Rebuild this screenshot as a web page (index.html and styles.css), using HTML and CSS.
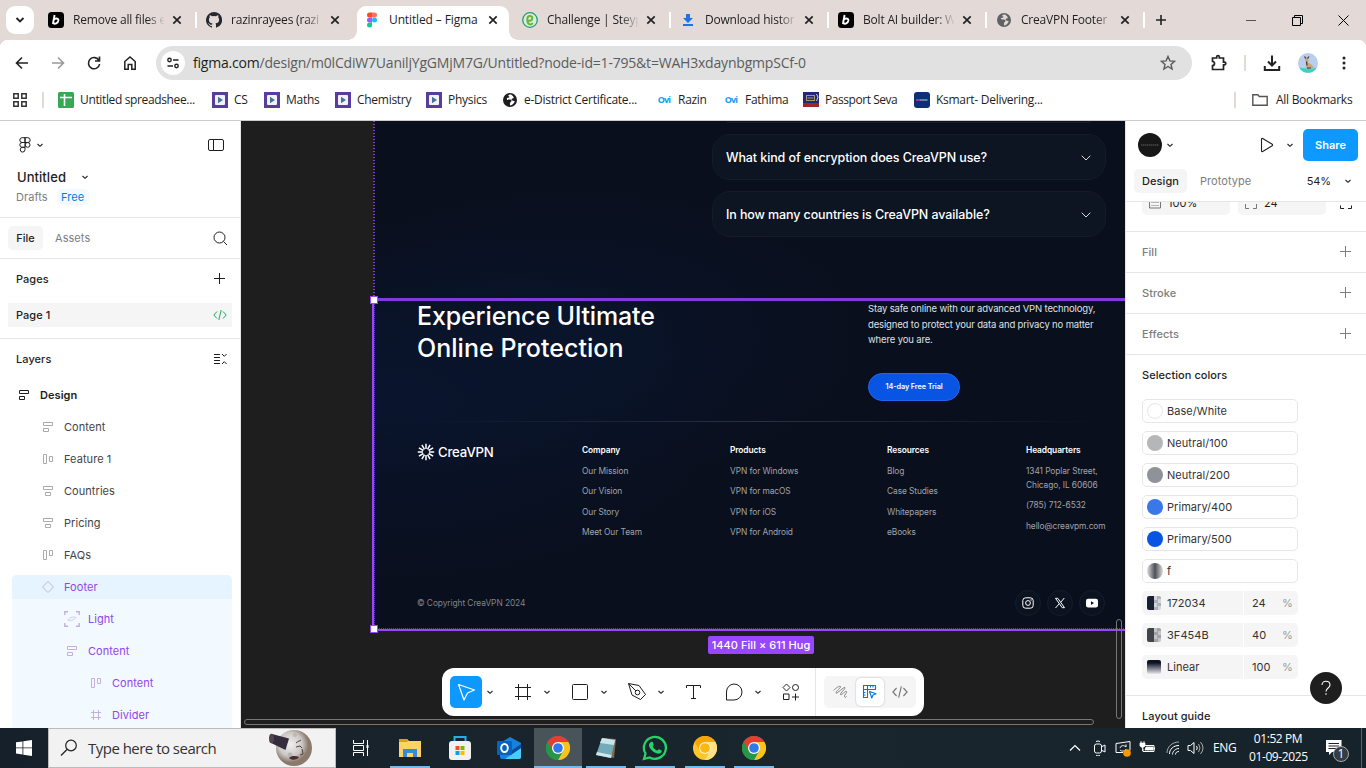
FILE: index.html
```html
<!DOCTYPE html>
<html lang="en">
<head>
<meta charset="utf-8">
<title>Untitled – Figma</title>
<link rel="stylesheet" href="styles.css">
</head>
<body>
<svg class="defs" width="0" height="0">
  <symbol id="close" viewBox="0 0 10 10"><path d="M1.3 1.3l7.4 7.4M8.7 1.3L1.3 8.7" stroke="#222" stroke-width="1.7" fill="none"/></symbol>
  <symbol id="chev" viewBox="0 0 8 8"><path d="M1.5 3L4 5.3 6.5 3" stroke="#1e1e1e" stroke-width="1.100" fill="none"/></symbol>
  <symbol id="plus" viewBox="0 0 12 12"><path d="M5.500 0v11M0 5.500h11" stroke="currentColor" fill="none"/></symbol>
  <symbol id="bolt" viewBox="0 0 16 16"><rect width="16" height="16" rx="3.5" fill="#000"/><path d="M6.6 3L4.9 12M5.6 8.2c1-2.2 5-2.4 4.8.2-.3 2.8-3.7 4.3-5.2 2.5" stroke="#fff" stroke-width="1.9" fill="none"/></symbol>
  <symbol id="globe" viewBox="0 0 16 16"><circle cx="8" cy="8" r="7" fill="currentColor"/><path d="M9 2.500c-3 0-3.300 1.200-2 2 1.500.8-.8 1.700-1.800 1.300-1 1.200.3 1.800 2 1.600 2.300-.2 2.800 1 2 2-.8.800-1.200 1-1.200 2.400v1.600c2.500-.2 4-2 4.800-4.200-1-.6-2.300-.2-3-1.200-.6-1 .3-1.600 1.200-1.600s1-1.300 0-2.200c-.6-.6-1-1-2-1.700z" fill="var(--land)"/></symbol>
  <symbol id="play" viewBox="0 0 16 16"><rect width="16" height="16" fill="#573e9e"/><rect x="3" y="3" width="10" height="10" rx="1" fill="#f4f0fa"/><path d="M6 4.800l5 3.200-5 3.200z" fill="#3d7796"/></symbol>
  <symbol id="lay-left" viewBox="0 0 12 12"><path d="M1.500 1.500h9v3h-9zM1.500 7.500h5v3h-5z" stroke="currentColor" fill="none"/></symbol>
  <symbol id="lay-center" viewBox="0 0 12 12"><path d="M1.500 1.500h9v3h-9zM3.500 7.500h5v3h-5z" stroke="currentColor" fill="none"/></symbol>
  <symbol id="lay-row" viewBox="0 0 12 12"><path d="M1.500 1.500h3v9h-3zM7.500 3.500h3v5h-3z" stroke="currentColor" fill="none"/></symbol>
  <symbol id="lay-rowtop" viewBox="0 0 12 12"><path d="M1.500 1.500h3v9h-3zM7.500 1.500h3v5h-3z" stroke="currentColor" fill="none"/></symbol>
  <symbol id="hash" viewBox="0 0 16 16"><path d="M3.500 0v16M12.500 0v16M0 3.500h16M0 12.500h16" stroke="currentColor" fill="none"/></symbol>
  <symbol id="code" viewBox="0 0 14 12"><path d="M4 2.500L.8 6 4 9.500M10 2.500L13.200 6 10 9.500M8.200 1L5.800 11" stroke="currentColor" fill="none"/></symbol>
  <symbol id="chrome" viewBox="0 0 24 24"><circle cx="12" cy="12" r="12" fill="#2aa14a"/><path d="M1.600 6A12 12 0 0 1 22.400 6H12L7 15z" fill="#e43e31"/><path d="M22.400 6A12 12 0 0 1 12 24L17.200 15 12 6z" fill="#fcc31e"/><path d="M1.600 6L7 15 12 18 16 16 12 24A12 12 0 0 1 1.600 6z" fill="#249847"/><circle cx="12" cy="12" r="6" fill="#fff"/><circle cx="12" cy="12" r="4.800" fill="#2f79ea"/></symbol>
</svg>

<header class="tabs">
  <div class="tabsearch"><svg width="10" height="8" viewBox="0 0 10 8"><path d="M1.500 2L5 5.500 8.500 2" stroke="#222" stroke-width="1.800" fill="none"/></svg></div>
  <div class="tab"><svg width="16" height="16"><use href="#bolt"/></svg><span>Remove all files e</span><svg width="10" height="10"><use href="#close"/></svg></div>
  <div class="tab"><svg width="16" height="16" viewBox="0 0 16 16"><path fill="#24292f" d="M8 0a8 8 0 0 0-2.530 15.590c.4.070.55-.17.55-.38v-1.330c-2.230.48-2.700-1.080-2.700-1.080-.36-.92-.89-1.170-.89-1.170-.73-.5.050-.49.050-.49.800.060 1.230.83 1.230.83.71 1.220 1.870.87 2.330.66.070-.52.280-.87.500-1.070-1.780-.2-3.640-.89-3.640-3.950 0-.87.310-1.590.82-2.150-.08-.2-.36-1.020.08-2.120 0 0 .67-.22 2.200.82a7.700 7.700 0 0 1 4 0c1.530-1.040 2.200-.82 2.200-.82.44 1.100.16 1.920.08 2.120.51.560.82 1.280.82 2.150 0 3.070-1.870 3.750-3.650 3.950.29.250.54.730.54 1.480v2.200c0 .21.150.46.550.38A8 8 0 0 0 8 0z"/></svg><span>razinrayees (razi</span><svg width="10" height="10"><use href="#close"/></svg></div>
  <div class="tab active"><svg width="16" height="16" viewBox="0 0 16 16"><path d="M8 .5H5.500a2.500 2.500 0 0 0 0 5H8z" fill="#f24e1e"/><path d="M8 .5h2.500a2.500 2.500 0 0 1 0 5H8z" fill="#ff7262"/><path d="M8 5.500H5.500a2.500 2.500 0 0 0 0 5H8z" fill="#a259ff"/><circle cx="10.500" cy="8" r="2.500" fill="#1abcfe"/><path d="M8 10.500H5.500A2.500 2.500 0 1 0 8 13z" fill="#0acf83"/></svg><span>Untitled – Figma</span><svg width="10" height="10"><use href="#close"/></svg></div>
  <div class="tab"><svg width="16" height="16" viewBox="0 0 16 16"><circle cx="8" cy="8" r="7.300" fill="#d9eed6" stroke="#249b7d" stroke-width="1.300"/><path d="M5.500 8.500c3 1 5-.5 4.800-2.500C10 3.500 5.500 3 5.300 7c-.2 6 3.700 6.500 5.500 4" stroke="#6bb43c" stroke-width="2" fill="none"/></svg><span>Challenge | Steyp</span><svg width="10" height="10"><use href="#close"/></svg></div>
  <div class="tab"><svg width="16" height="16" viewBox="0 0 16 16"><path d="M6 2h4v4h3L8 11 3 6h3zM3 12h10v2H3z" fill="#1a73e8"/></svg><span>Download histor</span><svg width="10" height="10"><use href="#close"/></svg></div>
  <div class="tab"><svg width="16" height="16"><use href="#bolt"/></svg><span>Bolt AI builder: W</span><svg width="10" height="10"><use href="#close"/></svg></div>
  <div class="tab"><svg class="gray" width="16" height="16"><use href="#globe"/></svg><span>CreaVPN Footer</span><svg width="10" height="10"><use href="#close"/></svg></div>
  <svg class="newtab" width="12" height="12" viewBox="0 0 12 12"><path d="M6 1v10M1 6h10" stroke="#222" stroke-width="1.600"/></svg>
  <div class="win">
    <svg width="11" height="11" viewBox="0 0 11 11"><path d="M0 5.500h10" stroke="#555"/></svg>
    <svg width="11" height="11" viewBox="0 0 11 11"><path d="M.5 2.500h8v8h-8zM2.500 2.500v-2h8v8h-2" stroke="#000" fill="none"/></svg>
    <svg width="11" height="11" viewBox="0 0 11 11"><path d="M.5.5l10 10M10.500.5l-10 10" stroke="#000" fill="none"/></svg>
  </div>
</header>

<div class="nav">
  <svg width="16" height="16" viewBox="0 0 16 16"><path d="M14 8H3M8 2.500L2.500 8 8 13.500" stroke="#222" stroke-width="1.600" fill="none"/></svg>
  <svg width="16" height="16" viewBox="0 0 16 16"><path d="M2 8h11M8 2.500L13.500 8 8 13.500" stroke="#999" stroke-width="1.600" fill="none"/></svg>
  <svg width="16" height="16" viewBox="0 0 16 16"><path d="M13 5.500A5.600 5.600 0 1 0 13.600 9M13.500 1.500V6H9" stroke="#222" stroke-width="1.600" fill="none"/></svg>
  <svg width="16" height="16" viewBox="0 0 16 16"><path d="M2.800 6.500L8 2l5.200 4.500v7.700h-3.400V9.500H6.200v4.700H2.800z" stroke="#222" stroke-width="1.500" fill="none"/></svg>
  <div class="url">
    <i><svg width="14" height="14" viewBox="0 0 14 14"><g stroke="#222" stroke-width="1.400" fill="none"><circle cx="3.500" cy="4" r="1.700"/><path d="M7 4h5.500M1.500 10H7"/><circle cx="10.500" cy="10" r="1.700"/></g></svg></i>
    <p><b>figma.com</b>/design/m0lCdiW7UaniljYgGMjM7G/Untitled?node-id=1-795&amp;t=WAH3xdaynbgmpSCf-0</p>
    <svg width="16" height="16" viewBox="0 0 16 16"><path d="M8 1.500l1.900 4.400 4.700.4-3.600 3.100 1.100 4.600L8 11.500 3.900 14 5 9.400 1.400 6.300l4.700-.4z" stroke="#5a5a5a" stroke-width="1.400" fill="none"/></svg>
  </div>
  <div class="ext">
    <svg width="18" height="18" viewBox="0 0 18 18"><path d="M2.500 4h4.200V2.800a1.300 1.300 0 0 1 2.600 0V4h4.200v4.200h1a1.300 1.300 0 0 1 0 2.600h-1v4.700h-11v-4a2 2 0 0 0 0-4z" stroke="#222" stroke-width="1.700" fill="none"/></svg>
    <b></b>
    <svg width="18" height="18" viewBox="0 0 18 18"><path d="M9 1.500v9.500M5 7.500l4 4 4-4M1.800 12v4h14.400v-4" stroke="#222" stroke-width="2" fill="none"/></svg>
    <svg width="20" height="20" viewBox="0 0 20 20"><circle cx="10" cy="10" r="10" fill="#b9cdee"/><path d="M1.200 14.500a10 10 0 0 0 17.600 0c-6 2-12 1-17.600 0z" fill="#3fcfc3"/><path d="M6.500 3.500l2 2 2-2v4l-.5 2 3.500 2 2.500 3.500-6 .5-2-.5.500-5-1.500-3z" fill="#c5aa7d"/><path d="M6.500 3.500l1.500 2M11 3.500l-1.500 2M8.500 8.500l.5 4M9 15h4" stroke="#3c3328" stroke-width="1.200" fill="none"/></svg>
    <svg width="4" height="16" viewBox="0 0 4 16"><circle cx="2" cy="3" r="1.500" fill="#222"/><circle cx="2" cy="8" r="1.500" fill="#222"/><circle cx="2" cy="13" r="1.500" fill="#222"/></svg>
  </div>
</div>

<div class="bookmarks">
  <svg width="14" height="14" viewBox="0 0 14 14"><path d="M.8.8h4.400v4.400H.8zM8.800.8h4.400v4.400H8.800zM.8 8.800h4.400v4.400H.8zM8.800 8.800h4.400v4.400H8.800z" stroke="#333" stroke-width="1.500" fill="none"/></svg>
  <b></b>
  <div><svg width="16" height="16" viewBox="0 0 16 16"><rect width="16" height="16" rx="1.500" fill="#34a853"/><path d="M2 5.500h12M6.500 2v12" stroke="#fff" stroke-width="1.600"/></svg><span class="s1">Untitled spreadshee...</span></div>
  <div><svg width="16" height="16"><use href="#play"/></svg><span>CS</span></div>
  <div><svg width="16" height="16"><use href="#play"/></svg><span>Maths</span></div>
  <div><svg width="16" height="16"><use href="#play"/></svg><span>Chemistry</span></div>
  <div><svg width="16" height="16"><use href="#play"/></svg><span>Physics</span></div>
  <div><svg width="16" height="16"><use href="#globe"/></svg><span>e-District Certificate...</span></div>
  <div><em>Ovi</em><span>Razin</span></div>
  <div><em>Ovi</em><span>Fathima</span></div>
  <div><svg width="16" height="16" viewBox="0 0 16 16"><path fill="#222778" d="M0 0h16v11H0z"/><path fill="#9b2825" d="M0 11h16v4H0z"/><path d="M3 3.500h9M4.500 6h6M3 8.500h9M3.500 3v6M11.500 3v6" stroke="#a59a68"/><path d="M13.500 2l1.500 3-1.500 4" stroke="#c8d7e7" fill="none"/></svg><span class="s3">Passport Seva</span></div>
  <div><svg width="16" height="16" viewBox="0 0 16 16"><rect width="16" height="16" rx="3" fill="#0d2f77"/><path d="M2 8h4" stroke="#ba3d86" stroke-width="1.600"/><path d="M6 8h7.500" stroke="#9db5db" stroke-width="1.200"/></svg><span>Ksmart- Delivering...</span></div>
  <b></b>
  <div><svg width="16" height="16" viewBox="0 0 16 16"><path d="M.8 2.800h5l1.500 1.700h7.900v8.700H.8z" stroke="#555" stroke-width="1.400" fill="none"/></svg><span>All Bookmarks</span></div>
</div>

<main class="app">
  <aside class="left">
    <div class="l-top">
      <svg width="12" height="16" viewBox="0 0 12 16"><path d="M6 .7H3.200a2.400 2.400 0 0 0 0 4.800H6zM6 .7h2.800a2.400 2.400 0 0 1 0 4.800H6zM6 5.500H3.200a2.400 2.400 0 0 0 0 4.800H6zM6 10.300H3.200A2.400 2.400 0 1 0 6 12.700z" stroke="#1e1e1e" fill="none"/><circle cx="8.600" cy="7.900" r="2.400" stroke="#1e1e1e" fill="none"/></svg>
      <svg width="8" height="8"><use href="#chev"/></svg>
      <svg class="end" width="16" height="12" viewBox="0 0 16 12"><rect x=".5" y=".5" width="15" height="11" rx="1.500" stroke="#1e1e1e" fill="none"/><path d="M5.500.5v11" stroke="#1e1e1e"/></svg>
    </div>
    <div class="l-name"><b>Untitled</b><svg width="8" height="8"><use href="#chev"/></svg></div>
    <div class="l-draft"><span>Drafts</span><i>Free</i></div>
    <div class="l-tabs"><b>File</b><span>Assets</span><svg class="end" width="15" height="15" viewBox="0 0 15 15"><circle cx="6.500" cy="6.500" r="5.500" stroke="#1e1e1e" fill="none"/><path d="M10.500 10.500l3.500 3.500" stroke="#1e1e1e"/></svg></div>
    <div class="l-head pages"><b>Pages</b><svg width="12" height="12"><use href="#plus"/></svg></div>
    <div class="l-page"><b>Page 1</b><svg width="14" height="12"><use href="#code"/></svg></div>
    <div class="l-head layers"><b>Layers</b><svg width="13" height="12" viewBox="0 0 13 12"><path d="M0 1.500h6M0 4.500h6M0 7.500h6M0 10.500h6M8 1l2.300 2.300L12.600 1M8 11l2.300-2.300 2.300 2.300" stroke="#1e1e1e" fill="none"/></svg></div>
    <ul>
      <li class="root"><svg width="12" height="12"><use href="#lay-left"/></svg>Design</li>
      <li class="d1"><svg width="12" height="12"><use href="#lay-left"/></svg>Content</li>
      <li class="d1"><svg width="12" height="12"><use href="#lay-row"/></svg>Feature 1</li>
      <li class="d1"><svg width="12" height="12"><use href="#lay-center"/></svg>Countries</li>
      <li class="d1"><svg width="12" height="12"><use href="#lay-center"/></svg>Pricing</li>
      <li class="d1"><svg width="12" height="12"><use href="#lay-rowtop"/></svg>FAQs</li>
    </ul>
    <ul class="sel">
      <li class="d1 head"><svg width="12" height="12" viewBox="0 0 12 12"><path d="M6 .5L11.500 6 6 11.500.5 6z" stroke="currentColor" fill="none"/></svg>Footer</li>
      <li class="d2"><svg class="wide" width="16" height="16" viewBox="0 0 16 16"><path d="M.8 4V.8H4M12 .8h3.200V4M.8 12v3.200H4M12 15.200h3.200V12" stroke="currentColor" stroke-width="1.400" fill="none"/><path d="M4 9.200c0-2 5-4 8-2.700C11 8.500 7 10.200 4 9.200" stroke="currentColor" stroke-width=".6" fill="none"/></svg>Light</li>
      <li class="d2"><svg width="12" height="12"><use href="#lay-left"/></svg>Content</li>
      <li class="d3"><svg width="12" height="12"><use href="#lay-rowtop"/></svg>Content</li>
      <li class="d3"><svg width="12" height="12" viewBox="0 0 12 12"><path d="M3.500 1v10M8.500 1v10M1 3.500h10M1 8.500h10" stroke="currentColor"/></svg>Divider</li>
    </ul>
  </aside>

  <section class="canvas">
    <div class="frame">
      <div class="faq cut"></div>
      <div class="faq"><span>What kind of encryption does CreaVPN use?</span><svg width="10" height="6" viewBox="0 0 10 6"><path d="M.7.7L5 5 9.300.7" stroke="#ddd" fill="none"/></svg></div>
      <div class="faq"><span class="q2">In how many countries is CreaVPN available?</span><svg width="10" height="6" viewBox="0 0 10 6"><path d="M.7.7L5 5 9.300.7" stroke="#ddd" fill="none"/></svg></div>
      <div class="hero">
        <h1>Experience Ultimate<br><span>Online Protection</span></h1>
        <div><p>Stay safe online with our advanced VPN technology,<br>designed to protect your data and privacy no matter<br>where you are.</p><button>14-day Free Trial</button></div>
      </div>
      <div class="rule"></div>
      <div class="cols">
        <div class="logo"><svg width="18" height="18" viewBox="0 0 18 18"><path d="M9 6V.8M10.500 6.400l2.600-4.500M11.600 7.500l4.500-2.600M12 9h5.200M11.600 10.500l4.500 2.600M10.500 11.600l2.600 4.500M9 12v5.200M7.500 11.600l-2.600 4.500M6.400 10.500l-4.500 2.600M6 9H.8M6.400 7.500L1.900 4.900M7.500 6.400L4.900 1.900" stroke="#fff" stroke-width="1.500"/></svg>CreaVPN</div>
        <div><b>Company</b><span>Our Mission</span><span>Our Vision</span><span>Our Story</span><span>Meet Our Team</span></div>
        <div><b>Products</b><span>VPN for Windows</span><span>VPN for macOS</span><span>VPN for iOS</span><span>VPN for Android</span></div>
        <div><b>Resources</b><span>Blog</span><span>Case Studies</span><span>Whitepapers</span><span>eBooks</span></div>
        <div><b>Headquarters</b><span class="addr">1341 Poplar Street,<br>Chicago, IL 60606</span><span>(785) 712-6532</span><span>hello@creavpm.com</span></div>
      </div>
      <div class="foot"><span>© Copyright CreaVPN 2024</span>
        <i><svg width="12" height="12" viewBox="0 0 12 12"><rect x=".8" y=".8" width="10.400" height="10.400" rx="2.800" stroke="#fff" fill="none"/><circle cx="6" cy="6" r="2.400" stroke="#fff" fill="none"/><circle cx="9" cy="3" r=".7" fill="#fff"/></svg></i>
        <i><svg width="12" height="12" viewBox="0 0 12 12"><path d="M1.500 1.300h2.300l6.700 9.400H8.200zM10.300 1L6.700 5.300M5.200 6.800L1.500 11" stroke="#fff" fill="none"/></svg></i>
        <i><svg width="12" height="12" viewBox="0 0 12 12"><rect x="0" y="1.800" width="12" height="8.600" rx="2.200" fill="#fff"/><path d="M5 4.200L8 6 5 7.900z" fill="#0a101d"/></svg></i>
      </div>
    </div>
    <div class="selection"><i></i><i></i></div>
    <div class="size">1440 Fill × 611 Hug</div>
    <div class="vbar"></div><div class="hbar"></div>
    <div class="tools">
      <div class="move"><svg width="20" height="20" viewBox="0 0 20 20"><path d="M2.500 2.500l16 5.500-7 3-3.500 7z" stroke="#fff" stroke-width="1.200" stroke-linejoin="round" fill="none"/></svg></div>
      <svg width="8" height="8"><use href="#chev"/></svg>
      <svg width="16" height="16"><use href="#hash"/></svg>
      <svg width="8" height="8"><use href="#chev"/></svg>
      <svg width="16" height="16" viewBox="0 0 16 16"><rect x=".5" y=".5" width="15" height="15" rx="1" stroke="#1e1e1e" fill="none"/></svg>
      <svg width="8" height="8"><use href="#chev"/></svg>
      <svg width="20" height="20" viewBox="0 0 20 20"><path d="M1.500 1.500l10.500 2 6.500 9-5 5-8.500-4.500zM1.500 1.500l7.400 7.400" stroke="#1e1e1e" fill="none" stroke-linejoin="round"/><circle cx="10.500" cy="10.500" r="2.300" stroke="#1e1e1e" fill="none"/></svg>
      <svg width="8" height="8"><use href="#chev"/></svg>
      <svg width="16" height="16" viewBox="0 0 16 16"><path d="M1.500 4V1.500h14V4M8.500 1.500v13M6 14.500h5" stroke="#1e1e1e" fill="none"/></svg>
      <svg width="18" height="18" viewBox="0 0 18 18"><path d="M9 1a8 8 0 1 1 0 16H1.500V9A7.800 7.800 0 0 1 9 1z" stroke="#1e1e1e" fill="none"/></svg>
      <svg width="8" height="8"><use href="#chev"/></svg>
      <svg width="18" height="18" viewBox="0 0 18 18"><path d="M4.500 1L8 4.500 4.500 8 1 4.500zM1.500 11h5.500v5.500H1.500zM13.500 10.500v7M10 14h7" stroke="#1e1e1e" fill="none"/><circle cx="13.500" cy="4.500" r="3" stroke="#1e1e1e" fill="none"/></svg>
      <b></b>
      <div class="mode">
        <svg width="16" height="16" viewBox="0 0 16 16"><path d="M1.500 6.500C4 4 7.500 1.500 8.500 2.500S3.500 7.500 4 9s8-6.500 9-5.500-5 5.500-4.500 7 5-4 6-3-2.500 3.500-2 5 1.500.5 2 0" stroke="#777" stroke-width=".9" fill="none"/></svg>
        <div><svg width="16" height="16" viewBox="0 0 16 16"><path d="M1.500 1.500h12v4h-8v8h-4zM5.500 1.500v4h-4M8.500 1.500v2M11 1.500v2M1.500 8.500h2M1.500 11h2M7.500 7.500l6.500 2.300-3 1.200-1.200 3z" stroke="#0075dc" stroke-width="1.100" fill="none" stroke-linejoin="round"/></svg></div>
        <svg width="16" height="14"><use href="#code"/></svg>
      </div>
    </div>
  </section>

  <aside class="right">
    <div class="r-top">
      <svg width="24" height="24" viewBox="0 0 24 24"><circle cx="12" cy="12" r="12" fill="#171717"/><path d="M3 12h18" stroke="#484848" stroke-width="1.500" stroke-dasharray="1.500 .5"/></svg>
      <svg width="8" height="8"><use href="#chev"/></svg>
      <svg width="14" height="16" viewBox="0 0 14 16"><path d="M1.500 2.200c0-.8.600-1 1.200-.7l9.500 5.800c.5.400.5 1 0 1.400l-9.500 5.800c-.6.300-1.200.1-1.200-.7z" stroke="#1e1e1e" stroke-width="1.100" fill="none"/></svg>
      <svg width="8" height="8"><use href="#chev"/></svg>
      <button>Share</button>
    </div>
    <div class="r-tabs"><b>Design</b><span>Prototype</span><u>54%</u><svg width="8" height="8"><use href="#chev"/></svg></div>
    <div class="r-fields">
      <div><svg width="12" height="12" viewBox="0 0 12 12"><path d="M.5 0v11h11V0" stroke="#777" fill="none"/><path d="M2.500 5.500h8M2.500 8.500h8" stroke="#777" stroke-dasharray="1 1"/></svg>100%</div>
      <div><svg width="12" height="12" viewBox="0 0 12 12"><path d="M.5 7v4.500H4M8 11.500h3.500V7" stroke="#777" fill="none"/></svg>24</div>
      <svg width="12" height="12" viewBox="0 0 12 12"><path d="M.5 7.500v3H4M8 10.500h3.500v-3" stroke="#1e1e1e" fill="none"/></svg>
    </div>
    <div class="r-sec">Fill<svg width="12" height="12"><use href="#plus"/></svg></div>
    <div class="r-sec">Stroke<svg width="12" height="12"><use href="#plus"/></svg></div>
    <div class="r-sec">Effects<svg width="12" height="12"><use href="#plus"/></svg></div>
    <div class="colors">
      <h3>Selection colors</h3>
      <div class="c"><i class="white"></i>Base/White</div>
      <div class="c"><i class="n1"></i>Neutral/100</div>
      <div class="c"><i class="n2"></i>Neutral/200</div>
      <div class="c"><i class="p4"></i>Primary/400</div>
      <div class="c"><i class="p5"></i>Primary/500</div>
      <div class="c"><i class="f"></i>f</div>
      <div class="h"><i class="h1"></i><span>172034</span><u>24</u><em>%</em></div>
      <div class="h"><i class="h2"></i><span>3F454B</span><u>40</u><em>%</em></div>
      <div class="h"><i class="h3"></i><span>Linear</span><u>100</u><em>%</em></div>
    </div>
    <div class="guide">Layout guide</div>
    <div class="help"><svg width="12" height="16" viewBox="0 0 12 16"><path d="M2 5c0-5 8-5 8 0 0 3-4 3-4 6.500" stroke="#fff" stroke-width="1.100" fill="none"/><circle cx="6" cy="14" r=".8" fill="#fff"/></svg></div>
  </aside>
</main>

<footer class="taskbar">
  <div class="start"><svg width="16" height="16" viewBox="0 0 16 16"><path d="M0 2.300L6.500 1.400v6.100H0zM7.300 1.300L16 0v7.500H7.300zM0 8.300h6.500v6.100L0 13.500zM7.300 8.300H16V16l-8.700-1.300z" fill="#fff"/></svg></div>
  <div class="search"><svg width="18" height="18" viewBox="0 0 18 18"><circle cx="11" cy="6.500" r="5.300" stroke="#222" stroke-width="1.200" fill="none"/><path d="M7 10.500L1 16.500" stroke="#222" stroke-width="1.300"/></svg><span>Type here to search</span>
    <svg class="moon" width="44" height="38" viewBox="0 0 44 38"><defs><radialGradient id="mg" cx=".4" cy=".4"><stop offset="0" stop-color="#f1efee"/><stop offset=".65" stop-color="#ccc8c5"/><stop offset="1" stop-color="#8b7a6c"/></radialGradient></defs><circle cx="25" cy="19" r="18" fill="url(#mg)"/><circle cx="21" cy="26" r="2.500" fill="#b9b5b3"/><circle cx="26" cy="6" r="2" fill="#bcb8b6"/><path d="M3 5L20 9.500 16.500 21 1 13.500z" fill="#332d3d"/><ellipse cx="2.500" cy="9.500" rx="2.500" ry="4.800" fill="#55424a"/><path d="M27 14c2-2 4-2 5-3M27 18l4-1 2 2M33 20l1 5-3 1" stroke="#4f4348" fill="none"/><path d="M20 29c3-3 7-2 10-1-2 3-7 4-10 1z" fill="#4b2933"/></svg>
  </div>
  <div class="apps">
    <div><svg width="18" height="18" viewBox="0 0 18 18"><path d="M2.500 1v3.500h10V1M2.500 17v-3.500h10V17M2.500 6.500h10v5h-10zM16.500 1v16" stroke="#fff" fill="none"/><path d="M15.500 6h2v3h-2z" fill="#fff"/></svg></div>
    <div class="run"><svg width="22" height="22" viewBox="0 0 22 22"><path d="M0 2h8l2 2h12v16H0z" fill="#fcd364"/><path d="M0 2h8l1 2-1 1H0z" fill="#dba116"/><path d="M4 12h14v8h-4v-4H8v4H4z" fill="#378bd8"/></svg></div>
    <div><svg width="24" height="24" viewBox="0 0 24 24"><path d="M6.500 6V1h11v5" stroke="#20b1eb" stroke-width="2" fill="none"/><rect x="1" y="5" width="22" height="19" rx="3" fill="#f1f1f1"/><path fill="#f25022" d="M7.500 10h4v4h-4z"/><path fill="#7fba00" d="M12.500 10h4v4h-4z"/><path fill="#00a4ef" d="M7.500 15h4v4h-4z"/><path fill="#ffb900" d="M12.500 15h4v4h-4z"/></svg></div>
    <div><svg width="24" height="24" viewBox="0 0 24 24"><path d="M3 7l10-6 11 6v14q0 2-2 2H5q-2 0-2-2z" fill="#1782db"/><path d="M24 8v13q0 2-2 2H8L24 12z" fill="#48cdfb"/><path d="M14 15L24 8v4l-9 6z" fill="#0b4c9b"/><rect y="5" width="15" height="14" rx="1" fill="#0563bd"/><ellipse cx="7.500" cy="12" rx="3.300" ry="4" stroke="#fff" stroke-width="1.900" fill="none"/></svg></div>
    <div class="cur"><svg width="24" height="24"><use href="#chrome"/></svg></div>
    <div class="run"><svg width="24" height="24" viewBox="0 0 24 24"><path d="M8 2l14 1-2 19-5-1z" fill="#806a4e"/><path d="M8 2l13 2-4 18L2 19z" fill="#71acb8"/><path d="M8 2l13 2-1 5L6 7z" fill="#c9e3e8"/><path d="M2 19l15 3 .7-3L3 16z" fill="#d2e6e9"/></svg></div>
    <div class="run"><svg width="26" height="26" viewBox="0 0 26 26"><path d="M2 24l1.500-5.500a11 11 0 1 1 4.200 4z" stroke="#25d366" stroke-width="2.300" fill="none"/><path d="M9 7c2-1.200 2 1 2.700 2.700.3.800-1.300 1.300-.7 2.300 1 1.700 2.200 2.700 4 3.500.9.400 1.300-1.700 2.200-1.200 1.300.7 3 1 2.500 2.200-1 2.700-4 2.700-7 1C9.500 15.800 7 12.500 7 10c0-1.500 1-2.500 2-3z" fill="#25d366"/></svg></div>
    <div class="run"><svg width="24" height="24" viewBox="0 0 24 24"><circle cx="12" cy="12" r="12" fill="#ffc629"/><path d="M1.600 6A12 12 0 0 1 22.400 6H12L7 15z" fill="#f9a602"/><path d="M22.400 6A12 12 0 0 1 12 24l5-9-5-9z" fill="#ffe082"/><circle cx="12" cy="12" r="6" fill="#fff2c7"/><circle cx="12" cy="12" r="4.800" fill="#fbb712"/></svg></div>
    <div class="run"><svg width="24" height="24"><use href="#chrome"/></svg></div>
  </div>
  <div class="tray">
    <svg width="12" height="8" viewBox="0 0 12 8"><path d="M1 6.500l5-5 5 5" stroke="#fff" stroke-width="1.200" fill="none"/></svg>
    <svg width="13" height="16" viewBox="0 0 13 16"><rect x="1.500" y="4" width="7" height="9" rx="2" stroke="#fff" fill="none"/><path d="M9 6.500l3-1.500v7l-3-1.500M3 1.500q2-1 4 0M3 15.500q2 1 4 0" stroke="#fff" fill="none"/></svg>
    <svg width="17" height="17" viewBox="0 0 17 17"><path d="M1 12.500v-9l14-2v9M1 12.500h7M5 8c1-3 4-3 6-1V4.500M11 9c-1 2-4 3-6 1" stroke="#fff" fill="none"/><circle cx="12" cy="13" r="3.800" fill="#ff9800"/></svg>
    <svg width="17" height="14" viewBox="0 0 17 14"><path d="M5.500 4.500h9.500v6H4v-3M15.500 6.500v2" stroke="#fff" fill="none"/><path d="M7 6h7v3H6zM1 2h5v3q-2.500 3-5 0zM2 0v2M5 0v2M3.500 6v4" stroke="#fff" stroke-width=".8" fill="#fff"/></svg>
    <svg width="14" height="14" viewBox="0 0 14 14"><g stroke="#fff" fill="none"><path d="M1 12C1 6 6 1 13 1" opacity=".6"/><path d="M3.500 13c0-5 4-8.500 9.500-8.500M6.500 13.500c0-3 3-6 6.500-6M9.500 13.500c0-2 1.500-3 3.500-3"/></g></svg>
    <svg width="17" height="14" viewBox="0 0 17 14"><path d="M1 4.500h2.500L7 1.500v11L3.500 9.500H1zM9.500 5q1.500 2 0 4" stroke="#fff" fill="none"/><path d="M11.500 3q3 4 0 8M13.500 1q5 6 0 12" stroke="#aaa" fill="none"/></svg>
    <span>ENG</span>
    <time>01:52 PM<br>01-09-2025</time>
    <div class="note"><svg width="18" height="18" viewBox="0 0 18 18"><path d="M1 1h15.500v12H7l-3 3v-3H1z" fill="#fff"/><path d="M3.500 4.500H14M3.500 7H14M3.500 9.500H11" stroke="#222"/></svg><i>1</i></div>
  </div>
</footer>
</body>
</html>
```
FILE: styles.css
```css
* { box-sizing: border-box; }
body { margin: 0; width: 1366px; height: 768px; overflow: hidden; display: flex; flex-direction: column; font: 12px/16px "Open Sans", sans-serif; color: #1e1e1e; background: #fff; }
svg { display: block; flex: none; --land: #fff; }
.defs { position: absolute; }
b { font-weight: 500; }
i, em { font-style: normal; }
u { text-decoration: none; }
span { white-space: nowrap; }
button { border: 0; padding: 0; font: inherit; }

.tabs { height: 40px; flex: none; display: flex; align-items: center; background: #e3dad7; }
.tabsearch { width: 28px; height: 28px; margin: 0 6px; border-radius: 9px; background: #fff; display: grid; place-items: center; }
.tab { width: 158px; height: 34px; margin-top: 6px; padding: 0 16px 6px 8px; display: flex; align-items: center; gap: 8px; letter-spacing: -.2px; position: relative; }
.tab span { width: 92px; padding-left: 1px; margin-right: -1px; -webkit-mask-image: linear-gradient(90deg, #000 75px, transparent 93px); mask-image: linear-gradient(90deg, #000 75px, transparent 93px); }
.tab > svg:last-child { margin-left: auto; }
.tab::after { content: ""; width: 2px; height: 16px; background: #fff; position: absolute; right: 1px; top: 6px; }
.tab.active { border-radius: 9px 9px 0 0; background: #fff; width: 152px; margin-left: 1px; padding-left: 7px; padding-right: 11px; margin-right: 5px; letter-spacing: -.12px; }
.tab.active span { -webkit-mask-image: none; mask-image: none; }
.tab.active::before { content: ""; position: absolute; left: -9px; bottom: 0; width: 9px; height: 9px; background: radial-gradient(circle at 0 0, #e3dad7 8.500px, #fff 9px); }
.tab.active::after { right: -9px; top: auto; bottom: 0; width: 9px; height: 9px; background: radial-gradient(circle at 100% 0, #e3dad7 8.500px, #fff 9px); }
.tab:nth-child(3)::after { display: none; }
.gray { color: #5f6368; --land: #e3dad7; }
.newtab { margin-left: 9px; }
.win { margin-left: auto; padding-right: 17px; display: flex; gap: 35px; }

.nav { height: 46px; flex: none; display: flex; align-items: center; padding-left: 14px; gap: 20px; background: radial-gradient(circle at 8px 8px, #fff 8px, #e3dad7 8.500px) 0 0/8px 8px no-repeat, radial-gradient(circle at 0 8px, #fff 8px, #e3dad7 8.500px) 100% 0/8px 8px no-repeat, #fff; }
.url { width: 1036px; height: 34px; margin-left: -2px; border-radius: 17px; background: #e1e1e1; display: flex; align-items: center; padding: 0 16px 0 5px; }
.url i { width: 24px; height: 24px; border-radius: 50%; background: #fff; display: grid; place-items: center; }
.url p { margin: 0 auto 0 8px; font-size: 14px; letter-spacing: -.2px; color: #5c5c5c; white-space: nowrap; }
.url b { color: #1e1e1e; font-weight: 400; }
.ext { display: flex; align-items: center; margin-left: -2px; }
.ext b { width: 2px; height: 16px; background: #e3dad7; margin: 0 17px 0 16px; }
.ext svg:nth-child(4) { margin: 0 24px 0 17px; }

.bookmarks { height: 35px; flex: none; border-bottom: 1px solid #ccc; padding: 0 0 6px 13px; display: grid; grid-template-columns: 29px 16px 154px 52px 71px 91px 76px 154px 67px 80px 111px 320px 18px 110px; align-items: center; letter-spacing: -.28px; }
.bookmarks div { display: flex; align-items: center; gap: 6px; }
.bookmarks div:last-child { gap: 8px; }
.bookmarks b { width: 2px; height: 16px; background: #e3dad7; }
.bookmarks em { width: 16px; text-align: center; font: 700 9px/12px "Open Sans", sans-serif; letter-spacing: -.9px; color: #129cf5; }
.s1 { letter-spacing: -.36px; }
.s3 { letter-spacing: -.45px; }

.app { height: 607px; flex: none; display: flex; font: 11px/16px Inter, sans-serif; letter-spacing: .055px; }
.left { width: 241px; flex: none; border-right: 1px solid #e6e6e6; overflow: hidden; }
.end { margin-left: auto; }
.l-top { height: 48px; padding: 0 16px 0 19px; display: flex; align-items: center; gap: 5px; }
.l-name { height: 16px; padding-left: 17px; display: flex; align-items: center; gap: 15px; font-size: 13px; }
.l-draft { height: 33px; padding: 4px 0 13px 16px; display: flex; align-items: center; gap: 9px; color: #7d7d7d; border-bottom: 1px solid #e6e6e6; }
.l-draft i { width: 32px; border-radius: 5px; background: #f2f9ff; color: #007be5; text-align: center; }
.l-tabs { height: 41px; padding: 0 12px 0 8px; display: flex; align-items: center; gap: 12px; color: #7d7d7d; border-bottom: 1px solid #e6e6e6; }
.l-tabs b { width: 35px; height: 24px; border-radius: 5px; background: #f5f5f5; color: #1e1e1e; text-align: center; line-height: 24px; }
.l-head { height: 44px; padding: 0 14px 4px 16px; display: flex; align-items: center; justify-content: space-between; }
.l-head.layers { height: 40px; padding-bottom: 0; padding-right: 13px; }
.l-page { height: 36px; margin: 0; padding: 0 13px 12px 16px; display: flex; align-items: center; justify-content: space-between; border-bottom: 1px solid #e6e6e6; color: #14ae5c; background: linear-gradient(#f5f5f5, #f5f5f5) 8px 0/224px 24px no-repeat; }
.l-page b { color: #1e1e1e; }
.left ul { list-style: none; margin: 0; padding: 0; }
.left li { height: 32px; display: flex; align-items: center; gap: 10px; color: #444; }
.left li svg { color: #aaa; }
.left .root { padding-left: 18px; color: #1e1e1e; font-weight: 600; }
.left .root svg { color: #1e1e1e; }
.d1 { padding-left: 42px; }
.left .sel { margin: 4px 8px 0 12px; border-radius: 5px 5px 0 0; overflow: hidden; background: #f2f9ff; }
.left .sel li { color: #9147e8; }
.left .sel svg { color: #c5afe0; }
.left .sel .head { height: 24px; margin-bottom: 4px; padding-left: 30px; background: #e5f4ff; }
.sel .d2 { padding-left: 54px; }
.left .sel .wide { margin: 0 -2px; }
.sel .d3 { padding-left: 78px; }

.canvas { width: 884px; flex: none; background: #1e1e1e; position: relative; overflow: hidden; }
.frame { position: absolute; left: 133px; top: 0; width: 751px; height: 509px; padding: 0 19px 0 43px; color: #fff; background: radial-gradient(ellipse 290px 150px at 200px 215px, #0a173199, transparent), radial-gradient(ellipse 330px 180px at 30px 280px, #0a1733aa, transparent), #090f1d; letter-spacing: 0; }
.faq { height: 46px; width: 394px; margin: 0 0 11px 295px; padding: 1px 14px 0 13px; display: flex; align-items: center; justify-content: space-between; border: 1px solid #151c29; border-radius: 18px; background: #0d1422; font-size: 12.500px; font-weight: 500; letter-spacing: -.1px; }
.faq.cut { height: 2px; border-width: 0 0 1px; border-radius: 0; width: 364px; margin-left: 310px; }
.faq .q2 { letter-spacing: -.11px; }
.hero { height: 121px; margin-top: 63px; display: grid; grid-template-columns: 451px 1fr; }
.hero h1 { margin: 1px 0 0; font: 500 25px/31.500px Inter, sans-serif; letter-spacing: -.13px; white-space: nowrap; }
.hero h1 span { letter-spacing: .04px; }
.hero p { margin: 1px 0 25px; font-size: 9.500px; line-height: 15.600px; letter-spacing: -.15px; color: #dfe1e4; white-space: nowrap; }
.hero button { display: block; width: 92px; height: 28px; border-radius: 14px; border: 1px solid #2167eb; background: #0855e4; color: #fff; font: 600 7.300px/25px Inter, sans-serif; letter-spacing: -.1px; }
.rule { height: 1px; background: linear-gradient(90deg, transparent, #2b313e 50%, transparent); }
.cols { height: 162px; padding-top: 20px; display: grid; grid-template-columns: 165px 148px 157px 139px 90px; font-size: 8.400px; color: #a0a3a9; letter-spacing: -.09px; }
.cols > div { display: flex; flex-direction: column; }
.cols b { height: 16px; margin-bottom: 4.500px; font-weight: 600; color: #fff; }
.cols span { height: 16px; margin-bottom: 4.500px; }
.cols .addr { height: 30px; line-height: 14px; padding-top: 1px; }
.cols .logo { flex-direction: row; align-items: flex-start; gap: 3px; padding-top: 1px; color: #fff; font-size: 13.200px; line-height: 18px; font-weight: 500; letter-spacing: -.2px; }
.foot { display: flex; align-items: center; gap: 6px; margin-top: 6px; margin-right: 1px; font-size: 8.400px; letter-spacing: -.08px; color: #80848c; }
.foot span { margin-right: auto; }
.foot i { width: 26px; height: 26px; border: 1px solid #171e2b; border-radius: 50%; background: #0c1320; display: grid; place-items: center; }
.selection { position: absolute; left: 131px; top: 177px; width: 760px; height: 333px; border: 2px solid #9747ff; border-top: 3px solid #8439df; }
.selection::before { content: ""; position: absolute; left: -1px; top: -180px; width: 2px; height: 177px; background: repeating-linear-gradient(#7d3fd6 0 1px, #1a1628 1px 3px); }
.selection::after { content: ""; position: absolute; left: 0; right: 0; top: 0; bottom: 0; border: dotted #6c35b3; border-width: 0 0 1px 1px; }
.selection i { position: absolute; z-index: 1; left: -4px; top: -5px; width: 8px; height: 8px; background: #fff; border: 1px solid #9747ff; }
.selection i + i { top: auto; bottom: -4px; }
.size { position: absolute; left: 467px; top: 515px; width: 106px; height: 18px; border-radius: 2px; background: #9747ff; color: #fff; font-weight: 500; line-height: 18px; text-align: center; white-space: nowrap; }
.vbar, .hbar { position: absolute; border: 1px solid #777; border-radius: 3px; }
.vbar { left: 875px; top: 498px; width: 6px; height: 100px; }
.hbar { left: 3px; top: 598px; width: 850px; height: 6px; }
.tools { position: absolute; left: 201px; top: 547px; width: 482px; height: 48px; padding-left: 8px; border-radius: 12px; background: #fff; display: flex; align-items: center; }
.move { width: 32px; height: 32px; border-radius: 5px; background: #0d99ff; display: grid; place-items: center; margin-right: 4px; }
.tools > svg:nth-child(3) { margin: 0 12px 0 21px; }
.tools > svg:nth-child(5) { margin: 0 12px 0 21px; }
.tools > svg:nth-child(7) { margin: 0 10px 0 19px; }
.tools > svg:nth-child(9) { margin: 0 8px 0 20px; }
.tools > svg:nth-child(10) { margin: 0 11px 0 16px; }
.tools > svg:nth-child(12) { margin: 0 15px 0 20px; }
.tools > b { width: 1px; height: 48px; background: #e6e6e6; margin-right: 8px; }
.mode { width: 92px; height: 32px; border-radius: 5px; background: #f5f5f5; display: flex; align-items: center; justify-content: space-between; padding: 0 8px; color: #777; }
.mode div { width: 28px; height: 28px; border-radius: 5px; background: #fff; box-shadow: 0 0 2px #0004; display: grid; place-items: center; }

.right { width: 241px; border-left: 1px solid #e6e6e6; position: relative; overflow: hidden; background: #fff; }
.r-top { height: 48px; padding: 0 8px 0 12px; display: flex; align-items: center; }
.r-top svg:nth-child(2) { margin: 0 86px 0 4px; }
.r-top svg:nth-child(4) { margin: 0 9px 0 12px; }
.r-top button { width: 55px; height: 32px; border-radius: 5px; background: #0d99ff; color: #fff; font-weight: 600; }
.r-tabs { height: 33px; padding: 0 14px 8px 8px; display: flex; align-items: center; color: #7d7d7d; border-bottom: 1px solid #e6e6e6; }
.r-tabs b { width: 53px; height: 24px; line-height: 24px; border-radius: 5px; text-align: center; background: #f5f5f5; color: #1e1e1e; margin-right: 13px; }
.r-tabs u { color: #1e1e1e; margin: 0 13px 0 auto; letter-spacing: -.1px; }
.r-fields { height: 30px; border-bottom: 1px solid #e6e6e6; overflow: hidden; display: flex; gap: 8px; padding-left: 16px; align-items: flex-start; }
.r-fields div { width: 88px; height: 24px; flex: none; margin-top: -11px; border-radius: 5px; background: #f5f5f5; display: flex; align-items: center; gap: 7px; padding-left: 7px; }
.r-fields > svg { margin: -4px 0 0 6px; }
.r-sec { height: 41px; padding: 0 14px 0 16px; border-bottom: 1px solid #e6e6e6; display: flex; align-items: center; justify-content: space-between; color: #7d7d7d; font-weight: 500; }
.colors { height: 341px; padding: 12px 0 0 16px; border-bottom: 1px solid #e6e6e6; }
.colors h3 { margin: 0 0 16px; font: inherit; font-weight: 500; color: #1e1e1e; }
.c, .h { width: 156px; height: 24px; margin-bottom: 8px; border-radius: 5px; display: flex; align-items: center; color: #333; }
.c { border: 1px solid #e6e6e6; gap: 4px; padding-left: 4px; }
.c i { width: 16px; height: 16px; border-radius: 50%; }
.white { border: 1px solid #e6e6e6; }
.n1 { background: #b4b6b8; }
.n2 { background: #8f9298; }
.p4 { background: #3a78ea; }
.p5 { background: #0855e4; }
.f { background: linear-gradient(90deg, #ddd, #4c5158 50%, #ddd); }
.h { background: linear-gradient(90deg, transparent 101px, #fff 101px, #fff 102px, transparent 102px), #f5f5f5; }
.h i { width: 14px; height: 14px; border-radius: 2px; margin: 0 6px 0 5px; }
.h1 { background: linear-gradient(90deg, #172034 50%, transparent 50%), repeating-conic-gradient(#aeb0b5 0 25%, #d5d6d9 0 50%) 0 0/7px 7px; }
.h2 { background: linear-gradient(90deg, #3f454b 50%, transparent 50%), repeating-conic-gradient(#a0a3a6 0 25%, #c2c4c6 0 50%) 0 0/7px 7px; }
.h3 { background: linear-gradient(#0a1224 20%, #e8e8ec); }
.h span { width: 85px; }
.h u { width: 30px; }
.h em { color: #999; letter-spacing: -.5px; }
.guide { padding: 12px 16px; font-weight: 500; }
.help { position: absolute; left: 184px; top: 551px; width: 32px; height: 32px; border-radius: 50%; background: #1e1e1e; display: grid; place-items: center; }

.taskbar { height: 40px; flex: none; display: flex; background: linear-gradient(90deg, #16202a, #1a262d 60%, #17232a); color: #fff; }
.start { width: 48px; display: grid; place-items: center; }
.search { width: 288px; border: 1px solid #bbb; background: #f2f2f2; color: #333; display: flex; align-items: center; padding-left: 11px; font-size: 15px; letter-spacing: -.52px; }
.search span { margin-left: 10px; width: 129px; }
.moon { margin-left: 52px; }
.apps { display: grid; grid-template-columns: 48px 52px 47px 51px 48px 48px 50px 49px 49px; }
.apps div { display: grid; place-items: center; position: relative; }
.apps .run::after { content: ""; position: absolute; left: 50%; margin-left: -20px; bottom: 0; width: 40px; height: 2px; background: #76b9ed; }
.apps .cur { background: #49535a; border-bottom: 2px solid #76b9ed; padding-top: 2px; }
.tray { margin-left: auto; display: flex; align-items: center; }
.tray > svg:nth-child(1) { margin-right: 12px; }
.tray > svg:nth-child(2) { margin-right: 9px; }
.tray > svg:nth-child(3) { margin-right: 7px; }
.tray > svg:nth-child(4) { margin-right: 10px; }
.tray > svg:nth-child(5) { margin-right: 7px; }
.tray > svg:nth-child(6) { margin-right: 9px; }
.tray span { width: 36px; letter-spacing: -.3px; }
.tray time { width: 58px; text-align: center; line-height: 18px; letter-spacing: -.4px; white-space: nowrap; margin-right: 18px; }
.note { position: relative; width: 37px; height: 40px; padding-top: 11px; border-right: 1px solid #59636a; margin-right: 4px; }
.note i { position: absolute; left: 8px; top: 18px; width: 16px; height: 16px; border: 1px solid #aaa; border-radius: 50%; background: #333d44; text-align: center; line-height: 14px; }
```
